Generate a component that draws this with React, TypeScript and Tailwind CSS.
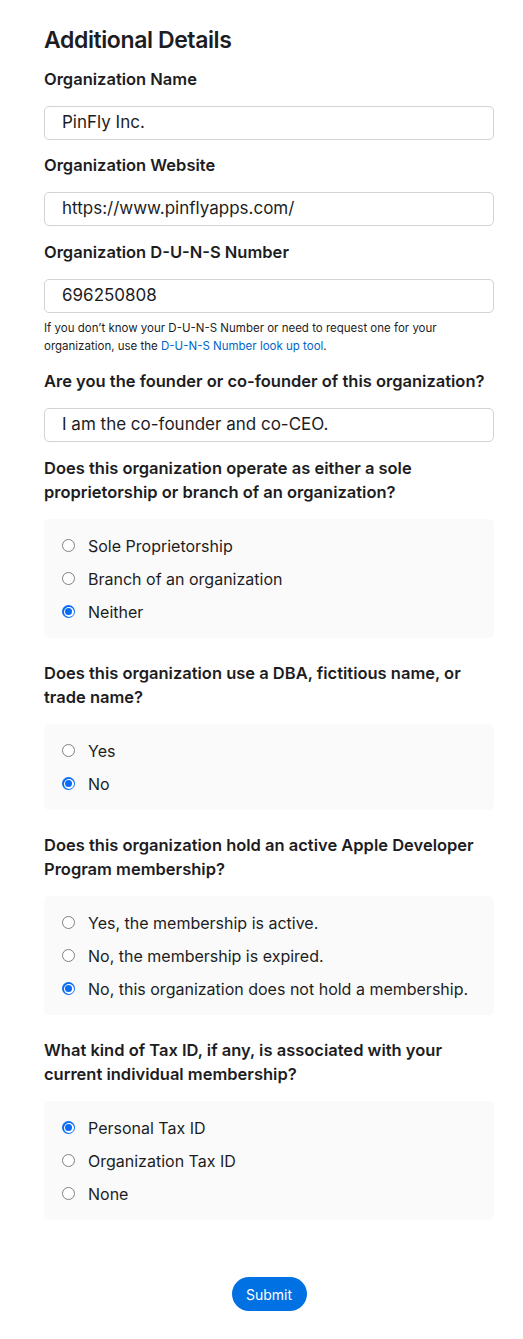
import React from "react";

const font = { fontFamily: "Inter, 'Liberation Sans', sans-serif" };

function Radio({ checked, label }: { checked?: boolean; label: string }) {
  return (
    <div className="flex h-[33px] items-center">
      {checked ? (
        <span className="flex h-[13px] w-[13px] items-center justify-center rounded-full bg-[#0a6cf5]">
          <span className="flex h-[10px] w-[10px] items-center justify-center rounded-full bg-white">
            <span className="h-[7px] w-[7px] rounded-full bg-[#0a6cf5]" />
          </span>
        </span>
      ) : (
        <span className="h-[13px] w-[13px] rounded-full border border-[#808080] bg-white" />
      )}
      <span className="ml-[13px] text-[16px] text-[#1d1d1f]">{label}</span>
    </div>
  );
}

function Field({ label, value }: { label: string; value: string }) {
  return (
    <div>
      <div className="text-[16.5px] font-semibold leading-6 text-[#1d1d1f]">{label}</div>
      <div className="mt-[15px] flex h-[34px] items-center rounded-[5px] border border-[#d2d2d7] px-[17px] text-[17px] text-[#1d1d1f]">
        {value}
      </div>
    </div>
  );
}

function Group({
  question,
  options,
  selected,
  first,
}: {
  question: string;
  options: string[];
  selected: number;
  first?: boolean;
}) {
  return (
    <div className={first ? "mt-[14px]" : "mt-[23px]"}>
      <div className="text-[16.5px] font-semibold leading-6 text-[#1d1d1f]">{question}</div>
      <div className="mt-[15px] rounded-[5px] bg-[#fafafa] px-[18px] py-[10px]">
        {options.map((o, i) => (
          <Radio key={o} label={o} checked={i === selected} />
        ))}
      </div>
    </div>
  );
}

export default function App() {
  return (
    <div className="min-h-[1339px] bg-white" style={font}>
      <div className="ml-[44px] w-[450px] pt-[25px]">
        <h1 className="text-[23px] font-semibold leading-[30px] tracking-[-0.4px] text-[#1d1d1f]">Additional Details</h1>
        <div className="mt-[12px]">
          <Field label="Organization Name" value="PinFly Inc." />
        </div>
        <div className="mt-[13px]">
          <Field label="Organization Website" value="https://www.pinflyapps.com/" />
        </div>
        <div className="mt-[14px]">
          <Field label="Organization D-U-N-S Number" value="696250808" />
        </div>
        <p className="mt-[6px] text-[11.5px] leading-[18px] text-[#1d1d1f]">
          If you don’t know your D-U-N-S Number or need to request one for your organization, use the{" "}
          <span className="text-[#0066cc]">D-U-N-S Number look up tool</span>.
        </p>
        <div className="mt-[14px]">
          <Field label="Are you the founder or co-founder of this organization?" value="I am the co-founder and co-CEO." />
        </div>
        <Group
          first
          question="Does this organization operate as either a sole proprietorship or branch of an organization?"
          options={["Sole Proprietorship", "Branch of an organization", "Neither"]}
          selected={2}
        />
        <Group
          question="Does this organization use a DBA, fictitious name, or trade name?"
          options={["Yes", "No"]}
          selected={1}
        />
        <Group
          question="Does this organization hold an active Apple Developer Program membership?"
          options={["Yes, the membership is active.", "No, the membership is expired.", "No, this organization does not hold a membership."]}
          selected={2}
        />
        <Group
          question="What kind of Tax ID, if any, is associated with your current individual membership?"
          options={["Personal Tax ID", "Organization Tax ID", "None"]}
          selected={0}
        />
        <div className="mt-[57px] flex justify-center pb-[28px]">
          <button className="h-[34px] w-[75px] rounded-full bg-[#0071e3] text-[14px] text-white">Submit</button>
        </div>
      </div>
    </div>
  );
}
